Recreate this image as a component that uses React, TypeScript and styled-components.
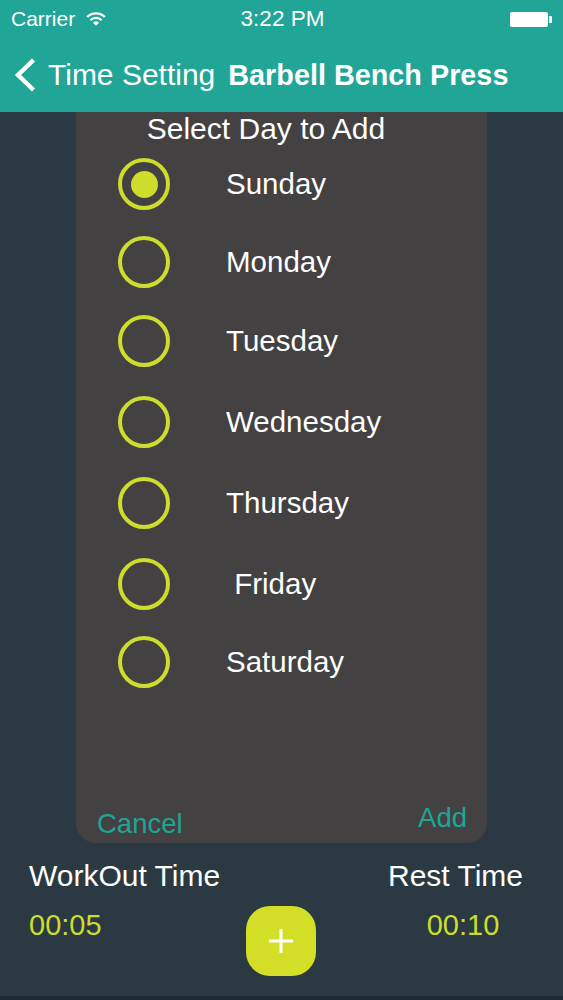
import React from "react";
import styled, { createGlobalStyle } from "styled-components";

const GlobalStyle = createGlobalStyle`
  html, body {
    margin: 0;
    padding: 0;
    background: #2b3a42;
    font-family: "Liberation Sans", Arial, sans-serif;
  }
`;

const Screen = styled.div`
  width: 563px;
  height: 1000px;
  display: flex;
  flex-direction: column;
  background: #2b3a42;
  border-bottom: 4px solid #1c2a31;
  box-sizing: border-box;
  overflow: hidden;
`;

const Header = styled.header`
  background: #21a596;
  height: 112px;
  display: flex;
  flex-direction: column;
  color: #fff;
  flex-shrink: 0;
`;

const StatusBar = styled.div`
  height: 38px;
  display: flex;
  align-items: center;
  padding: 0 11px 0 11px;
  font-size: 21px;
`;

const Carrier = styled.div`
  display: flex;
  align-items: center;
  gap: 11px;
  flex: 1;
`;

const Clock = styled.div`
  font-size: 22.5px;
  flex: 1;
  text-align: center;
  margin-left: 2px;
`;

const Battery = styled.div`
  flex: 1;
  display: flex;
  justify-content: flex-end;
  align-items: center;
`;

const BatteryBody = styled.div`
  width: 38px;
  height: 15px;
  background: #fff;
  border-radius: 2px;
`;

const BatteryNub = styled.div`
  width: 3px;
  height: 7px;
  background: #fff;
  margin-left: 1px;
  border-radius: 0 1px 1px 0;
`;

const NavBar = styled.div`
  flex: 1;
  display: flex;
  align-items: center;
  padding: 0 0 0 14px;
  font-size: 30px;
`;

const BackLabel = styled.span`
  margin-left: 12px;
`;

const Title = styled.span`
  font-weight: bold;
  font-size: 28.8px;
  margin-left: 13px;
`;

const Panel = styled.section`
  margin-left: 76px;
  width: 411px;
  height: 731px;
  background: #434142;
  border-radius: 0 0 20px 20px;
  display: flex;
  flex-direction: column;
  flex-shrink: 0;
`;

const PanelTitle = styled.div`
  height: 33px;
  line-height: 34px;
  text-align: center;
  color: #fff;
  font-size: 30px;
  padding-right: 31px;
`;

const DayList = styled.div`
  display: flex;
  flex-direction: column;
`;

const DayRow = styled.div<{ $h: number }>`
  height: ${(p) => p.$h}px;
  display: flex;
  align-items: center;
  padding-left: 42px;
`;

const Radio = styled.div<{ $checked?: boolean }>`
  width: 52px;
  height: 52px;
  box-sizing: border-box;
  border: 4px solid #cedc2c;
  border-radius: 50%;
  display: flex;
  align-items: center;
  justify-content: center;
  flex-shrink: 0;

  &::after {
    content: "";
    display: ${(p) => (p.$checked ? "block" : "none")};
    width: 27px;
    height: 27px;
    border-radius: 50%;
    background: #cedc2c;
  }
`;

const DayLabel = styled.span`
  margin-left: 56px;
  color: #fff;
  font-size: 29.5px;
  white-space: pre;
`;

const PanelFooter = styled.div`
  margin-top: auto;
  display: flex;
  justify-content: space-between;
  align-items: flex-end;
  padding: 0 20px 3px 21px;
`;

const FooterAction = styled.button<{ $raise?: number }>`
  background: none;
  border: none;
  padding: 0;
  font-family: inherit;
  font-size: 27.5px;
  line-height: 32px;
  color: #1fa595;
  margin-bottom: ${(p) => p.$raise ?? 0}px;
`;

const Bottom = styled.div`
  display: grid;
  grid-template-columns: 1fr auto 1fr;
  padding: 17px 40px 0 29px;
`;

const TimeBlock = styled.div<{ $end?: boolean }>`
  display: flex;
  flex-direction: column;
  align-items: ${(p) => (p.$end ? "center" : "flex-start")};
  justify-self: ${(p) => (p.$end ? "end" : "start")};
`;

const TimeLabel = styled.div`
  color: #fff;
  font-size: 30px;
  line-height: 32px;
`;

const TimeValue = styled.div<{ $shift?: number }>`
  color: #cedc2c;
  font-size: 29px;
  line-height: 32px;
  margin-top: 17px;
  margin-left: ${(p) => p.$shift ?? 0}px;
`;

const AddButton = styled.button`
  margin-top: 46px;
  margin-left: 10px;
  width: 70px;
  height: 70px;
  border: none;
  border-radius: 24px;
  background: #d3df26;
  display: flex;
  align-items: center;
  justify-content: center;
  padding: 0;
`;

const days: [string, number][] = [
  ["Sunday", 78],
  ["Monday", 78],
  ["Tuesday", 80.5],
  ["Wednesday", 80],
  ["Thursday", 82],
  [" Friday", 80.5],
  ["Saturday", 76],
];

export default function App() {
  return (
    <>
      <GlobalStyle />
      <Screen>
        <Header>
          <StatusBar>
            <Carrier>
              Carrier
              <svg width="20" height="14" viewBox="0 0 20 14">
                <path d="M1.2 5 A12.5 12.5 0 0 1 18.8 5" stroke="#fff" strokeWidth="2.2" fill="none" />
                <path d="M4.4 8.2 A8 8 0 0 1 15.6 8.2" stroke="#fff" strokeWidth="2.2" fill="none" />
                <path d="M10 13.6 L7 10.8 A4.3 4.3 0 0 1 13 10.8 Z" fill="#fff" />
              </svg>
            </Carrier>
            <Clock>3:22 PM</Clock>
            <Battery>
              <BatteryBody />
              <BatteryNub />
            </Battery>
          </StatusBar>
          <NavBar>
            <svg width="22" height="34" viewBox="0 0 22 34">
              <path d="M19.5 2 L4 17 L19.5 32" stroke="#fff" strokeWidth="4.4" fill="none" />
            </svg>
            <BackLabel>Time Setting</BackLabel>
            <Title>Barbell Bench Press</Title>
          </NavBar>
        </Header>

        <Panel>
          <PanelTitle>Select Day to Add</PanelTitle>
          <DayList>
            {days.map(([d, h], i) => (
              <DayRow key={d} $h={h}>
                <Radio $checked={i === 0} />
                <DayLabel>{d}</DayLabel>
              </DayRow>
            ))}
          </DayList>
          <PanelFooter>
            <FooterAction>Cancel</FooterAction>
            <FooterAction $raise={6}>Add</FooterAction>
          </PanelFooter>
        </Panel>

        <Bottom>
          <TimeBlock>
            <TimeLabel>WorkOut Time</TimeLabel>
            <TimeValue>00:05</TimeValue>
          </TimeBlock>
          <AddButton aria-label="add">
            <svg width="26" height="26" viewBox="0 0 26 26">
              <path d="M13 1 V25 M1 13 H25" stroke="#fff" strokeWidth="3" />
            </svg>
          </AddButton>
          <TimeBlock $end>
            <TimeLabel>Rest Time</TimeLabel>
            <TimeValue $shift={15}>00:10</TimeValue>
          </TimeBlock>
        </Bottom>
      </Screen>
    </>
  );
}
